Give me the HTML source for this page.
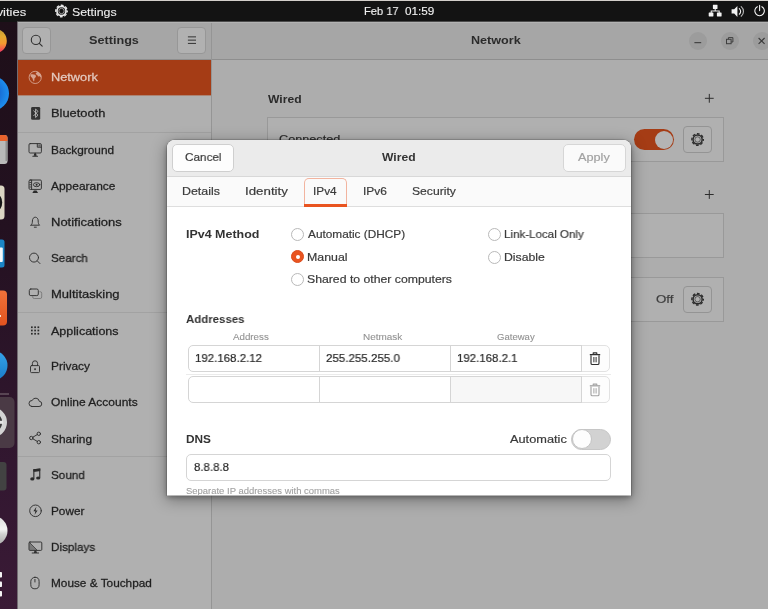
<!DOCTYPE html>
<html lang="en">
<head>
<meta charset="utf-8">
<title>Settings – Network – Wired</title>
<style>
*{box-sizing:border-box;margin:0;padding:0}
html,body{width:768px;height:609px;overflow:hidden;background:#adadad}
body{position:relative;font-family:"Liberation Sans","DejaVu Sans",sans-serif;font-size:12px;color:#2a2a2a}
div,span,svg{position:absolute}
svg{overflow:visible}
.t{white-space:nowrap;line-height:16px;transform-origin:0 0;-webkit-text-stroke:.2px currentColor;will-change:transform}
#topbar{left:0;top:0;width:768px;height:22px;background:#131313;overflow:hidden}
#tedge{left:17px;top:21px;width:751px;height:1px;background:#4c4c4c}
#tstrip{left:0;top:0;width:768px;height:1px;background:#d3cfca}
#dock{left:0;top:22px;width:18px;height:587px;background:linear-gradient(180deg,#1e0f19 0%,#231120 35%,#321730 75%,#3a1a36 100%);border-right:1px solid #726c72;overflow:hidden}
#sidebar{left:18px;top:60px;width:193px;height:549px;background:#b0b0b0}
#head{left:18px;top:22px;width:750px;height:38px;background:#a6a6a6;border-top:1px solid #b3b3b3;border-bottom:1px solid #8e8e8e}
#vdiv{left:211px;top:23px;width:1px;height:586px;background:#959595}
#main{left:212px;top:60px;width:556px;height:549px;background:#adadad}
.hbtn{border:1px solid #979797;border-radius:4px;background:#b1b1b1}
.wbtn{width:18px;height:18px;border-radius:50%;background:#9c9c9c}
.sel{left:18px;top:60px;width:193px;height:35px;background:#a53c15;border-bottom:0}
.sel2{left:18px;top:95px;width:193px;height:1px;background:#ac8473}
.sep{left:18px;width:193px;height:1px;background:#a2a2a2}
.card{left:267px;width:457px;height:45px;background:#b0b0b0;border:1px solid #999}
.gbtn{left:683px;width:29px;height:27px;border:1px solid #949494;border-radius:4px;background:#b1b1b1}
#shadow{left:167px;top:140px;width:464px;height:355px;border-radius:8px 8px 0 0;box-shadow:0 2px 5px rgba(0,0,0,.30),0 4px 15px 1px rgba(0,0,0,.36),0 0 0 1px rgba(0,0,0,.13)}
#dbot{left:167px;top:495px;width:464px;height:1px;background:rgba(255,255,255,.55)}
#dialog{left:167px;top:140px;width:464px;height:355px;background:#fff;border-radius:8px 8px 0 0;overflow:hidden}
#dhead{left:0;top:0;width:464px;height:37px;background:#ebebeb;border-bottom:1px solid #d8d8d8}
#tabs{left:0;top:37px;width:464px;height:30px;background:#fafafa;border-bottom:1px solid #dedede}
.btn{top:4px;height:28px;border:1px solid #cfcfcf;border-radius:5px;background:#fdfdfd}
.radio{width:13px;height:13px;border-radius:50%;border:1px solid #b9b9b9;background:#fff}
.radio.on{border-color:#dc4c1c;background:#e95420}
.radio.on::after{content:"";position:absolute;left:3.5px;top:3.5px;width:4px;height:4px;border-radius:50%;background:#fff}
.ent{background:#fff;border:1px solid #d5d5d5}
</style>
</head>
<body>
<div id="main"></div>
<div id="sidebar"></div>
<div id="head"></div>
<div id="vdiv"></div>
<div id="topbar">
<span class="t" style="left:-24.99px;top:3.60px;font-size:11.2px;color:#ededed;transform:scaleX(1.1600);-webkit-text-stroke:0.1px currentColor">Activities</span>
<span class="t" style="left:72.17px;top:3.70px;font-size:11.2px;color:#ededed;transform:scaleX(1.1026);-webkit-text-stroke:0.1px currentColor">Settings</span>
<span class="t" style="left:364.39px;top:3.10px;font-size:11.2px;color:#f2f2f2;transform:scaleX(0.9944);-webkit-text-stroke:0.12px currentColor">Feb 17</span>
<span class="t" style="left:404.79px;top:3.10px;font-size:11.2px;color:#f2f2f2;transform:scaleX(1.0505);-webkit-text-stroke:0.12px currentColor">01:59</span>
<svg style="left:0px;top:0px" width="768" height="22" viewBox="0 0 768 22" ><circle cx="61.5" cy="11.0" r="4.55" fill="none" stroke="#e6e6e6" stroke-width="1.70"/><circle cx="61.5" cy="11.0" r="5.75" fill="none" stroke="#e6e6e6" stroke-width="1.35" stroke-dasharray="2.800 1.716" stroke-dashoffset="1.400"/><circle cx="61.5" cy="11.0" r="2.70" fill="none" stroke="#e6e6e6" stroke-width="0.70" opacity=".9"/><g transform="translate(0,1)"><g fill="#f2f2f2"><rect x="712.9" y="3.7" width="4.6" height="4.2" rx=".4"/><rect x="708.7" y="11.5" width="4.7" height="3.9" rx=".4"/><rect x="716.9" y="11.5" width="4.7" height="3.9" rx=".4"/><path d="M714.7 7.5h1v2h4v2.4h-1v-1.4h-7v1.4h-1V9.5h4z"/></g><g fill="#f2f2f2"><path d="M731.6 8.3h2.6l3.2-3.4v11l-3.2-3.4h-2.6z"/></g><g fill="none" stroke="#f2f2f2" stroke-width="1.1" stroke-linecap="round"><path d="M739.3 7.6a3.6 3.6 0 0 1 0 5.6"/><path d="M741.2 5.6a6.2 6.2 0 0 1 0 9.6" opacity=".75"/></g><g transform="translate(0,-.6)" fill="none" stroke="#f2f2f2" stroke-width="1.1" stroke-linecap="round"><path d="M757.3 6.3a4.8 4.8 0 1 0 4.6 0"/><path d="M759.6 5.0v5.2"/></g></g></svg>
</div>
<div id="tstrip"></div><div id="tedge"></div>
<div id="dock"><svg style="left:0px;top:0px" width="18" height="587" viewBox="0 0 18 587" ><defs><linearGradient id="ff" x1="0" y1="0" x2="0" y2="1"><stop offset="0" stop-color="#c29a36"/><stop offset=".3" stop-color="#e3aa32"/><stop offset=".6" stop-color="#f59a30"/><stop offset=".85" stop-color="#f5564f"/><stop offset="1" stop-color="#ee2a78"/></linearGradient><radialGradient id="tb" cx="-10" cy="71" r="20" gradientUnits="userSpaceOnUse"><stop offset="0" stop-color="#1459c2"/><stop offset=".5" stop-color="#186fd6"/><stop offset=".8" stop-color="#1b86e8"/><stop offset="1" stop-color="#2090f0"/></radialGradient><linearGradient id="sw" x1="0" y1="0" x2="0" y2="1"><stop offset="0" stop-color="#f0723a"/><stop offset="1" stop-color="#e2531f"/></linearGradient><linearGradient id="hp" x1="0" y1="0" x2="0" y2="1"><stop offset="0" stop-color="#36a3ea"/><stop offset="1" stop-color="#1a7cc9"/></linearGradient><linearGradient id="cd" x1="0" y1="0" x2="0" y2="1"><stop offset="0" stop-color="#dcdcdc"/><stop offset=".45" stop-color="#f4f4f4"/><stop offset=".62" stop-color="#d0d0d0"/><stop offset="1" stop-color="#a9a9a9"/></linearGradient></defs><ellipse cx="-5.2" cy="19" rx="12" ry="12.2" fill="url(#ff)"/><circle cx="-8.5" cy="71.5" r="17.5" fill="url(#tb)"/><rect x="-20" y="113" width="27.5" height="29" rx="3" fill="#b9b9b9"/><path d="M-20 119v-3a3 3 0 0 1 3-3H4.5a3 3 0 0 1 3 3v3z" fill="#e8622c"/><rect x="5.5" y="119" width="2" height="20" fill="#8f8f8f"/><rect x="-20" y="163.5" width="24.5" height="34" rx="3.5" fill="#dbd5c3"/><ellipse cx="-3" cy="180.5" rx="5.2" ry="8" fill="#161616"/><rect x="-20" y="217.5" width="24.5" height="28" rx="2.5" fill="#1b86c7"/><rect x="-20" y="225.5" width="22.800" height="14.500" rx="1" fill="#f4f8fb"/><rect x="-22" y="268.5" width="29" height="35" rx="4" fill="url(#sw)"/><rect x="-2" y="293" width="3" height="2" fill="#fbe3d8"/><circle cx="-7.3" cy="343.5" r="14.8" fill="url(#hp)"/><rect x="0" y="371.5" width="9" height="1" fill="#81757c"/><rect x="-10" y="375" width="24.5" height="51" rx="5" fill="#4a3a45"/><circle cx="-8" cy="400.3" r="12.3" fill="none" stroke="#d3d3d3" stroke-width="5.4"/><circle cx="-8" cy="400.3" r="9.4" fill="none" stroke="#3b3b3b" stroke-width="1.6"/><rect x="0" y="398.8" width="3.2" height="3" fill="#e6e6e6"/><rect x="-20" y="440" width="26.5" height="28.5" rx="3" fill="#424242"/><circle cx="-7.3" cy="508.7" r="14.8" fill="url(#cd)"/><g fill="#f4f4f4"><rect x="-2" y="550" width="4" height="5.5" rx=".8"/><rect x="-2" y="559.5" width="4" height="5.5" rx=".8"/><rect x="-2" y="569" width="4" height="5.5" rx=".8"/></g></svg></div>
<div class="hbtn" style="left:22px;top:27px;width:29px;height:27px"></div>
<div class="hbtn" style="left:177px;top:27px;width:29px;height:27px"></div>
<div class="wbtn" style="left:689px;top:31.5px"></div><div class="wbtn" style="left:720.5px;top:31.5px"></div><div class="wbtn" style="left:752.5px;top:31.5px"></div>
<svg style="left:0px;top:0px" width="768" height="60" viewBox="0 0 768 60" ><g fill="none" stroke="#303030" stroke-width="1.1" stroke-linecap="round"><circle cx="35.9" cy="39.9" r="4.6"/><path d="M39.3 43.3l2.9 2.9"/></g><g fill="#3e3e3e"><rect x="187.9" y="36.3" width="8.1" height="1.1"/><rect x="187.9" y="39.6" width="8.1" height="1.1"/><rect x="187.9" y="42.9" width="8.1" height="1.1"/></g><rect x="694.4" y="42.1" width="6.8" height="1.1" fill="#3e3e3e"/><g fill="none" stroke="#3e3e3e" stroke-width="1"><rect x="726.5" y="39.3" width="4.6" height="4.4"/><path d="M728.4 39.3v-1.7h4.5v4.4h-1.8"/></g><path d="M758.6 38.0l6.0 5.8M764.6 38.0l-6.0 5.8" stroke="#3a3a3a" stroke-width="1.1" fill="none"/></svg>
<div class="sel"></div><div class="sel2"></div>
<div class="sep" style="top:132px"></div><div class="sep" style="top:312px"></div><div class="sep" style="top:456px"></div>
<svg style="left:18px;top:60px" width="193" height="549" viewBox="18 60 193 549" ><g fill="none" stroke="#d6a491" stroke-width=".9"><circle cx="35.2" cy="77.4" r="6.1"/></g><path d="M30.4 74.600c1.500-.600 3.200-.500 4.700.100.700.500 1 1.300.800 2.100-.300.800-1.200 1-1.400 1.800-.200 1 .100 2-.500 2.900-.800-.700-1.100-1.800-1.400-2.800-.300-.900-1.300-1.300-1.800-2.100-.300-.600-.400-1.300-.400-2zM37.300 71.700c1.600.500 2.900 1.700 3.600 3.200.300.900.500 1.900.400 2.900-.800-.300-1.100-1.200-1.800-1.600-.600-.400-.700.600-1.200.400-.700-.300-.500-1.200-1.100-1.600-.500-.400-1.300-.300-1.500-.900-.200-.900.800-1.500 1.600-2.400z" fill="#d6a491"/><rect x="31.1" y="106.9" width="9.1" height="12.9" rx="1.4" fill="#333"/><path d="M33.4 110.6l4.6 4.600-2.400 2.300v-8.400l2.400 2.300-4.600 4.600" fill="none" stroke="#bdbdbd" stroke-width=".9" stroke-linejoin="round"/><g fill="none" stroke="#303030" stroke-width=".95" stroke-linecap="round" stroke-linejoin="round"><rect x="29" y="143.6" width="12.4" height="9.4" rx="1.2"/><path d="M32.8 156.3h4.800M35.2 153.2v2.600"/><path d="M37.300 143.800v3.400h4" /></g><rect x="38.3" y="144.4" width="2.4" height="2.2" fill="#2b2b2b" opacity=".55"/><path d="M33.600 155.800l.8-2.200h1.600l.8 2.200z" fill="#2b2b2b"/><g fill="none" stroke="#303030" stroke-width=".95" stroke-linecap="round" stroke-linejoin="round"><rect x="29" y="180" width="12.4" height="9.400" rx="1.2"/><path d="M31.6 180v9.400"/><ellipse cx="36.600" cy="184.700" rx="3.200" ry="2"/></g><circle cx="36.6" cy="184.700" r="1" fill="#2b2b2b"/><path d="M32.300 193l1.600-2.400h2.600l1.600 2.400z" fill="#2b2b2b"/><rect x="29.4" y="182.200" width="1.800" height=".8" fill="#2b2b2b"/><rect x="29.4" y="184.400" width="1.800" height=".8" fill="#2b2b2b"/><rect x="29.4" y="186.600" width="1.800" height=".8" fill="#2b2b2b"/><g fill="none" stroke="#303030" stroke-width=".95" stroke-linecap="round" stroke-linejoin="round"><path d="M31 225.200h8.600c-1.100-1-1.400-2.200-1.400-4.200 0-2.200-1.200-3.800-2.900-3.800s-2.900 1.600-2.900 3.800c0 2-.3 3.200-1.400 4.200z"/><path d="M34.300 227.200h2"/></g><g fill="none" stroke="#303030" stroke-width=".95" stroke-linecap="round" stroke-linejoin="round"><circle cx="34" cy="257.600" r="4.500"/><path d="M37.400 261l2.600 2.600"/></g><g fill="none" stroke="#303030" stroke-width=".95" stroke-linecap="round" stroke-linejoin="round"><rect x="29.300" y="289" width="9" height="6.600" rx="1.500"/><path d="M39.800 291.700h.4a1.500 1.500 0 0 1 1.500 1.500v3.800a1.500 1.500 0 0 1-1.500 1.500h-6a1.500 1.500 0 0 1-1.500-1.500v-.4" stroke="#7a7a7a"/></g><g fill="#2b2b2b"><rect x="31.00" y="326.40" width="1.700" height="1.700"/><rect x="31.00" y="329.65" width="1.700" height="1.700"/><rect x="31.00" y="332.90" width="1.700" height="1.700"/><rect x="34.25" y="326.40" width="1.700" height="1.700"/><rect x="34.25" y="329.65" width="1.700" height="1.700"/><rect x="34.25" y="332.90" width="1.700" height="1.700"/><rect x="37.50" y="326.40" width="1.700" height="1.700"/><rect x="37.50" y="329.65" width="1.700" height="1.700"/><rect x="37.50" y="332.90" width="1.700" height="1.700"/></g><g fill="none" stroke="#303030" stroke-width=".95" stroke-linecap="round" stroke-linejoin="round"><rect x="30.500" y="365.600" width="9" height="7" rx="1"/><path d="M32.400 365.400v-2a2.600 2.600 0 0 1 5.200 0v2"/></g><rect x="34.300" y="368.300" width="1.500" height="1.800" fill="#2b2b2b"/><g fill="none" stroke="#303030" stroke-width=".95" stroke-linecap="round" stroke-linejoin="round"><path d="M31.800 406.500h7.200a2.600 2.600 0 0 0 .3-5.200 3.700 3.700 0 0 0-7.100-.8 3 3 0 0 0-.4 6z"/></g><g fill="none" stroke="#303030" stroke-width=".95" stroke-linecap="round" stroke-linejoin="round"><circle cx="38.800" cy="433.800" r="1.700"/><circle cx="38.800" cy="442.200" r="1.700"/><circle cx="31.300" cy="438" r="1.700"/><path d="M32.800 437.200l4.500-2.600M32.800 438.800l4.500 2.600"/></g><g fill="#2b2b2b"><path d="M33.300 469.200l7-0.600v9.200h-1.100v-6.500l-4.800.4v7h-1.100z"/><ellipse cx="32.300" cy="478.900" rx="2.100" ry="1.600"/><ellipse cx="38.200" cy="478" rx="2.100" ry="1.600"/><path d="M33.300 469.200l7-.6v2.200l-7 .6z"/></g><g fill="none" stroke="#303030" stroke-width=".95" stroke-linecap="round" stroke-linejoin="round"><circle cx="35.500" cy="510.800" r="5.800"/></g><path d="M36.400 506.800l-3 4.400h2l-.8 3.600 3-4.400h-2z" fill="#2b2b2b"/><g fill="none" stroke="#303030" stroke-width=".95" stroke-linecap="round" stroke-linejoin="round"><rect x="29" y="542" width="12.800" height="8.400" rx="1"/><path d="M32.200 553h6.400"/></g><path d="M33.800 553l.7-2.400h1.800l.7 2.400z" fill="#303030"/><path d="M29.300 542.300l8 8h-8z" fill="#2b2b2b" opacity=".4"/><path d="M29.400 542.400l7.900 7.900" stroke="#303030" stroke-width=".7" fill="none"/><g fill="none" stroke="#303030" stroke-width=".95" stroke-linecap="round" stroke-linejoin="round"><rect x="30.800" y="577.300" width="8.300" height="11.500" rx="4.100"/><path d="M34.950 579.400v2.600"/></g></svg>
<div class="card" style="top:117px"></div><div class="card" style="top:213px"></div><div class="card" style="top:277px"></div>
<div style="left:634px;top:129px;width:40px;height:21px;border-radius:11px;background:#a53c15"></div><div style="left:654.5px;top:130.5px;width:18px;height:18px;border-radius:50%;background:#b4b4b4"></div>
<div class="gbtn" style="top:126px"></div><div class="gbtn" style="top:286px"></div>
<svg style="left:212px;top:60px" width="556" height="549" viewBox="212 60 556 549" ><path d="M704.9 98.3h8.8M709.3 93.9v8.8M704.9 194.5h8.8M709.3 190.1v8.8" stroke="#2d2d2d" stroke-width="1" fill="none"/><circle cx="697.6" cy="139.5" r="4.55" fill="none" stroke="#2c2c2c" stroke-width="1.50"/><circle cx="697.6" cy="139.5" r="5.75" fill="none" stroke="#2c2c2c" stroke-width="1.35" stroke-dasharray="2.800 1.716" stroke-dashoffset="1.400"/><circle cx="697.6" cy="139.5" r="2.70" fill="none" stroke="#2c2c2c" stroke-width="0.70" opacity=".9"/><circle cx="697.6" cy="299.2" r="4.55" fill="none" stroke="#2c2c2c" stroke-width="1.50"/><circle cx="697.6" cy="299.2" r="5.75" fill="none" stroke="#2c2c2c" stroke-width="1.35" stroke-dasharray="2.800 1.716" stroke-dashoffset="1.400"/><circle cx="697.6" cy="299.2" r="2.70" fill="none" stroke="#2c2c2c" stroke-width="0.70" opacity=".9"/></svg>
<span class="t" style="left:88.98px;top:32.40px;font-size:11.8px;color:#2b2b2b;transform:scaleX(1.0721);font-weight:bold;-webkit-text-stroke:0px currentColor">Settings</span>
<span class="t" style="left:471.08px;top:32.40px;font-size:11.8px;color:#2b2b2b;transform:scaleX(1.0676);font-weight:bold;-webkit-text-stroke:0px currentColor">Network</span>
<span class="t" style="left:50.66px;top:69.40px;font-size:11.8px;color:#e3c9bf;transform:scaleX(1.0821);-webkit-text-stroke:0.28px currentColor">Network</span>
<span class="t" style="left:50.66px;top:105.40px;font-size:11.8px;color:#1f1f1f;transform:scaleX(1.0894);-webkit-text-stroke:0.28px currentColor">Bluetooth</span>
<span class="t" style="left:50.73px;top:141.90px;font-size:11.8px;color:#1f1f1f;transform:scaleX(1.0022);-webkit-text-stroke:0.28px currentColor">Background</span>
<span class="t" style="left:51.29px;top:178.40px;font-size:11.8px;color:#1f1f1f;transform:scaleX(1.0125);-webkit-text-stroke:0.28px currentColor">Appearance</span>
<span class="t" style="left:50.65px;top:214.40px;font-size:11.8px;color:#1f1f1f;transform:scaleX(1.1021);-webkit-text-stroke:0.28px currentColor">Notifications</span>
<span class="t" style="left:50.94px;top:250.40px;font-size:11.8px;color:#1f1f1f;transform:scaleX(0.9857);-webkit-text-stroke:0.28px currentColor">Search</span>
<span class="t" style="left:50.65px;top:286.40px;font-size:11.8px;color:#1f1f1f;transform:scaleX(1.1014);-webkit-text-stroke:0.28px currentColor">Multitasking</span>
<span class="t" style="left:51.28px;top:322.65px;font-size:11.8px;color:#1f1f1f;transform:scaleX(1.0628);-webkit-text-stroke:0.28px currentColor">Applications</span>
<span class="t" style="left:50.72px;top:358.40px;font-size:11.8px;color:#1f1f1f;transform:scaleX(1.0074);-webkit-text-stroke:0.28px currentColor">Privacy</span>
<span class="t" style="left:51.00px;top:394.40px;font-size:11.8px;color:#1f1f1f;transform:scaleX(1.0166);-webkit-text-stroke:0.28px currentColor">Online Accounts</span>
<span class="t" style="left:50.92px;top:430.65px;font-size:11.8px;color:#1f1f1f;transform:scaleX(1.0095);-webkit-text-stroke:0.28px currentColor">Sharing</span>
<span class="t" style="left:50.93px;top:467.15px;font-size:11.8px;color:#1f1f1f;transform:scaleX(0.9905);-webkit-text-stroke:0.28px currentColor">Sound</span>
<span class="t" style="left:50.73px;top:503.40px;font-size:11.8px;color:#1f1f1f;transform:scaleX(0.9984);-webkit-text-stroke:0.28px currentColor">Power</span>
<span class="t" style="left:50.74px;top:539.40px;font-size:11.8px;color:#1f1f1f;transform:scaleX(0.9892);-webkit-text-stroke:0.28px currentColor">Displays</span>
<span class="t" style="left:50.73px;top:575.40px;font-size:11.8px;color:#1f1f1f;transform:scaleX(1.0009);-webkit-text-stroke:0.28px currentColor">Mouse &amp; Touchpad</span>
<span class="t" style="left:268.00px;top:91.00px;font-size:11.8px;color:#2b2b2b;transform:scaleX(1.0277);font-weight:bold;-webkit-text-stroke:0px currentColor">Wired</span>
<span class="t" style="left:279.40px;top:131.20px;font-size:11.8px;color:#2b2b2b;transform:scaleX(1.0734)">Connected</span>
<span class="t" style="left:655.90px;top:291.00px;font-size:11.8px;color:#3e3e3e;transform:scaleX(1.1266)">Off</span>
<div id="shadow"></div>
<div id="dbot"></div>
<div id="dialog">
<div id="dhead"></div><div id="tabs"></div>
<div class="btn" style="left:5px;width:62px"></div><div class="btn" style="left:396px;width:63px;background:#fafafa;border-color:#d6d6d6"></div>
<div style="left:137px;top:38px;width:43px;height:29px;border:1px solid #f2b49f;border-bottom:0;border-radius:5px 5px 0 0"></div><div style="left:137px;top:64.3px;width:43px;height:2.5px;background:#e95420"></div>
<div class="radio" style="left:124.0px;top:88.00px"></div><div class="radio on" style="left:124.0px;top:110.00px"></div><div class="radio" style="left:124.0px;top:133.00px"></div><div class="radio" style="left:321.0px;top:88.00px"></div><div class="radio" style="left:321.0px;top:111.00px"></div>
<div class="ent" style="left:414px;top:205px;width:29px;height:27px;border-color:#e2e2e2;border-radius:0 5px 5px 0;background:#fdfdfd"></div><div class="ent" style="left:21px;top:205px;width:132px;height:27px;border-radius:5px 0 0 5px"></div><div class="ent" style="left:152px;top:205px;width:132px;height:27px"></div><div class="ent" style="left:283px;top:205px;width:132px;height:27px;"></div>
<div style="left:19px;top:234px;width:425px;height:1px;background:#ebebeb"></div>
<div class="ent" style="left:414px;top:236px;width:29px;height:27px;border-color:#e2e2e2;border-radius:0 5px 5px 0;background:#fdfdfd"></div><div class="ent" style="left:21px;top:236px;width:132px;height:27px;border-radius:5px 0 0 5px"></div><div class="ent" style="left:152px;top:236px;width:132px;height:27px"></div><div class="ent" style="left:283px;top:236px;width:132px;height:27px;background:#f7f7f7;"></div>
<svg style="left:0px;top:0px" width="464" height="355" viewBox="0 0 464 355" ><g transform="translate(422.5,212)" fill="none" stroke="#2f2f2f" stroke-width="1.15" stroke-linejoin="round"><path d="M3.7 2.2V.9h3.6v1.3" stroke-width="1.1"/><path d="M.3 2.6h10.4" stroke-width="1.3"/><path d="M1.5 3.2v8a1.3 1.3 0 0 0 1.3 1.3h5.4a1.3 1.3 0 0 0 1.3-1.3v-8"/><path d="M4.4 5v5.3M6.6 5v5.3" stroke-width="1"/></g><g transform="translate(422.5,243.2)" fill="none" stroke="#a3a3a3" stroke-width="1.15" stroke-linejoin="round"><path d="M3.7 2.2V.9h3.6v1.3" stroke-width="1.1"/><path d="M.3 2.6h10.4" stroke-width="1.3"/><path d="M1.5 3.2v8a1.3 1.3 0 0 0 1.3 1.3h5.4a1.3 1.3 0 0 0 1.3-1.3v-8"/><path d="M4.4 5v5.3M6.6 5v5.3" stroke-width="1"/></g></svg>
<div style="left:404px;top:288.5px;width:40px;height:21px;border-radius:11px;background:#d2d2d2;border:1px solid #c6c6c6"></div><div style="left:404.5px;top:289px;width:20px;height:20px;border-radius:50%;background:#fdfdfd;border:1px solid #c4c4c4"></div>
<div class="ent" style="left:19px;top:314px;width:425px;height:27px;border-radius:5px"></div>
<span class="t" style="left:18.19px;top:9.25px;font-size:11.8px;color:#3a3a3a;transform:scaleX(0.9935)">Cancel</span>
<span class="t" style="left:215.25px;top:9.45px;font-size:11.8px;color:#333;transform:scaleX(1.0277);font-weight:bold;-webkit-text-stroke:0px currentColor">Wired</span>
<span class="t" style="left:411.32px;top:9.25px;font-size:11.8px;color:#a2a2a2;transform:scaleX(1.0774)">Apply</span>
<span class="t" style="left:15.40px;top:43.25px;font-size:11.8px;color:#3a3a3a;transform:scaleX(1.0526)">Details</span>
<span class="t" style="left:77.89px;top:43.25px;font-size:11.8px;color:#3a3a3a;transform:scaleX(1.1274)">Identity</span>
<span class="t" style="left:146.21px;top:43.25px;font-size:11.8px;color:#3a3a3a;transform:scaleX(0.9866)">IPv4</span>
<span class="t" style="left:195.53px;top:43.25px;font-size:11.8px;color:#3a3a3a;transform:scaleX(1.0134)">IPv6</span>
<span class="t" style="left:244.87px;top:43.25px;font-size:11.8px;color:#3a3a3a;transform:scaleX(1.0302)">Security</span>
<span class="t" style="left:18.69px;top:86.15px;font-size:11.8px;color:#333;transform:scaleX(1.0562);font-weight:bold;-webkit-text-stroke:0px currentColor">IPv4 Method</span>
<span class="t" style="left:140.74px;top:86.25px;font-size:11.8px;color:#3a3a3a;transform:scaleX(1.0013)">Automatic (DHCP)</span>
<span class="t" style="left:140.15px;top:108.65px;font-size:11.8px;color:#3a3a3a;transform:scaleX(1.0480)">Manual</span>
<span class="t" style="left:140.37px;top:131.15px;font-size:11.8px;color:#3a3a3a;transform:scaleX(1.0378)">Shared to other computers</span>
<span class="t" style="left:336.70px;top:86.45px;font-size:11.8px;color:#3a3a3a;transform:scaleX(0.9802)">Link-Local Only</span>
<span class="t" style="left:336.66px;top:108.85px;font-size:11.8px;color:#3a3a3a;transform:scaleX(1.0386)">Disable</span>
<span class="t" style="left:19.01px;top:170.65px;font-size:11.8px;color:#333;transform:scaleX(0.9699);font-weight:bold;-webkit-text-stroke:0px currentColor">Addresses</span>
<span class="t" style="left:65.85px;top:189.25px;font-size:9px;color:#929292;transform:scaleX(1.0842);-webkit-text-stroke:0.1px currentColor">Address</span>
<span class="t" style="left:196.00px;top:189.25px;font-size:9px;color:#929292;transform:scaleX(1.1041);-webkit-text-stroke:0.1px currentColor">Netmask</span>
<span class="t" style="left:329.94px;top:189.25px;font-size:9px;color:#929292;transform:scaleX(1.0600);-webkit-text-stroke:0.1px currentColor">Gateway</span>
<span class="t" style="left:28.25px;top:210.05px;font-size:11.8px;color:#2a2a2a;transform:scaleX(0.9731)">192.168.2.12</span>
<span class="t" style="left:158.88px;top:210.05px;font-size:11.8px;color:#2a2a2a;transform:scaleX(0.9793)">255.255.255.0</span>
<span class="t" style="left:290.25px;top:210.05px;font-size:11.8px;color:#2a2a2a;transform:scaleX(0.9715)">192.168.2.1</span>
<span class="t" style="left:18.73px;top:290.65px;font-size:11.8px;color:#333;transform:scaleX(1.0029);font-weight:bold;-webkit-text-stroke:0px currentColor">DNS</span>
<span class="t" style="left:342.72px;top:290.65px;font-size:11.8px;color:#3a3a3a;transform:scaleX(1.0822)">Automatic</span>
<span class="t" style="left:26.70px;top:319.45px;font-size:11.8px;color:#2a2a2a;transform:scaleX(0.9709)">8.8.8.8</span>
<span class="t" style="left:18.55px;top:343.25px;font-size:9px;color:#a0a0a0;transform:scaleX(1.0506);-webkit-text-stroke:0.1px currentColor">Separate IP addresses with commas</span>
</div>
</body>
</html>
